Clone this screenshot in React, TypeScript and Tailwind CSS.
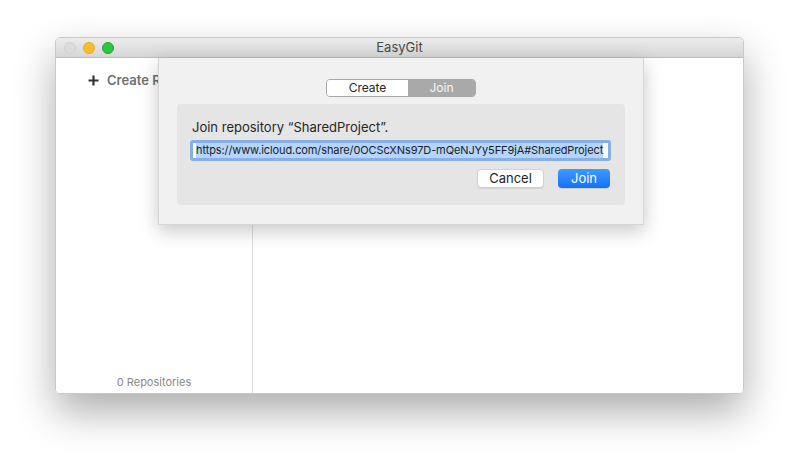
import React from "react";

const font = { fontFamily: '"Inter", "Liberation Sans", sans-serif' };

const TrafficLights = () => (
  <div className="flex items-center gap-[7px] pl-[8px]">
    <span className="h-[12px] w-[12px] rounded-full border border-[#cfcfcf] bg-[#dcdcdc]" />
    <span className="h-[12px] w-[12px] rounded-full border border-[#e0a82a] bg-[#fdbc2e]" />
    <span className="h-[12px] w-[12px] rounded-full border border-[#22a335] bg-[#28c840]" />
  </div>
);

const PlusIcon = () => (
  <svg width="11" height="11" viewBox="0 0 11 11">
    <path d="M5.5 0.5v10M0.5 5.5h10" stroke="#333" strokeWidth="2.2" />
  </svg>
);

const Sheet = () => (
  <div className="absolute left-[102px] top-0 flex h-[167px] w-[486px] flex-col items-center border-x border-b border-[#d6d6d6] bg-[#f1f1f1] shadow-[0_6px_18px_rgba(0,0,0,0.22)]">
    <div className="mt-[21px] flex h-[18px] w-[150px] overflow-hidden rounded-[4px] border border-[#a7a7a7] text-[12px]">
      <div className="flex w-[81px] items-center justify-center bg-white text-[#262626]">Create</div>
      <div className="flex flex-1 items-center justify-center bg-[#a9a9a9] text-[#f6f6f6]">Join</div>
    </div>
    <div className="mt-[7px] w-[448px] rounded-[4px] bg-[#e5e5e5] pb-[17px] pl-[13px] pr-[14px] pt-[14px]">
      <p className="pl-[2px] text-[13px] leading-[18px] text-[#262626]">Join repository “SharedProject”.</p>
      <div className="mt-[4px] flex h-[21px] w-[421px] items-center rounded-[3px] border-[3px] border-[#86aee8] bg-white pl-[3px]">
        <span className="whitespace-nowrap bg-[#b5d5fd] text-[11px] leading-[15px] tracking-[-0.1px] text-[#1c1c1c]">
          https://www.icloud.com/share/0OCScXNs97D-mQeNJYy5FF9jA#SharedProject
        </span>
      </div>
      <div className="mt-[8px] flex justify-end gap-[14px] pr-[1px]">
        <button className="h-[19px] w-[67px] rounded-[4px] border border-[#d0d0d0] bg-white text-[13px] leading-none text-[#262626] shadow-[0_1px_0_rgba(0,0,0,0.08)]">
          Cancel
        </button>
        <button className="h-[19px] w-[52px] rounded-[4px] bg-gradient-to-b from-[#3d9bff] to-[#1470f5] text-[13px] leading-none text-white shadow-[0_1px_0_rgba(0,0,0,0.1)]">
          Join
        </button>
      </div>
    </div>
  </div>
);

export default function App() {
  return (
    <div className="h-[467px] w-[799px] bg-white pl-[55px] pt-[37px]" style={font}>
      <div className="flex h-[357px] w-[689px] flex-col overflow-hidden rounded-[5px] border border-[#c9c9c9] shadow-[0_18px_40px_rgba(0,0,0,0.32)]">
        <div className="relative flex h-[20px] shrink-0 items-center border-b border-[#bcbcbc] bg-gradient-to-b from-[#ececec] to-[#d6d6d6]">
          <TrafficLights />
          <div className="absolute inset-0 flex items-center justify-center pt-[1px] text-[13px] text-[#4a4a4a]">EasyGit</div>
        </div>
        <div className="relative flex flex-1">
          <aside className="flex w-[197px] flex-col justify-between border-r border-[#dedede] bg-white">
            <div className="flex items-center gap-[8px] pl-[32px] pt-[13px] text-[13px] font-semibold text-[#707070]">
              <PlusIcon />
              <span>Create Repository</span>
            </div>
            <div className="pb-[3px] text-center text-[11px] text-[#8a8a8a]">0 Repositories</div>
          </aside>
          <main className="flex-1 bg-white" />
          <Sheet />
        </div>
      </div>
    </div>
  );
}
